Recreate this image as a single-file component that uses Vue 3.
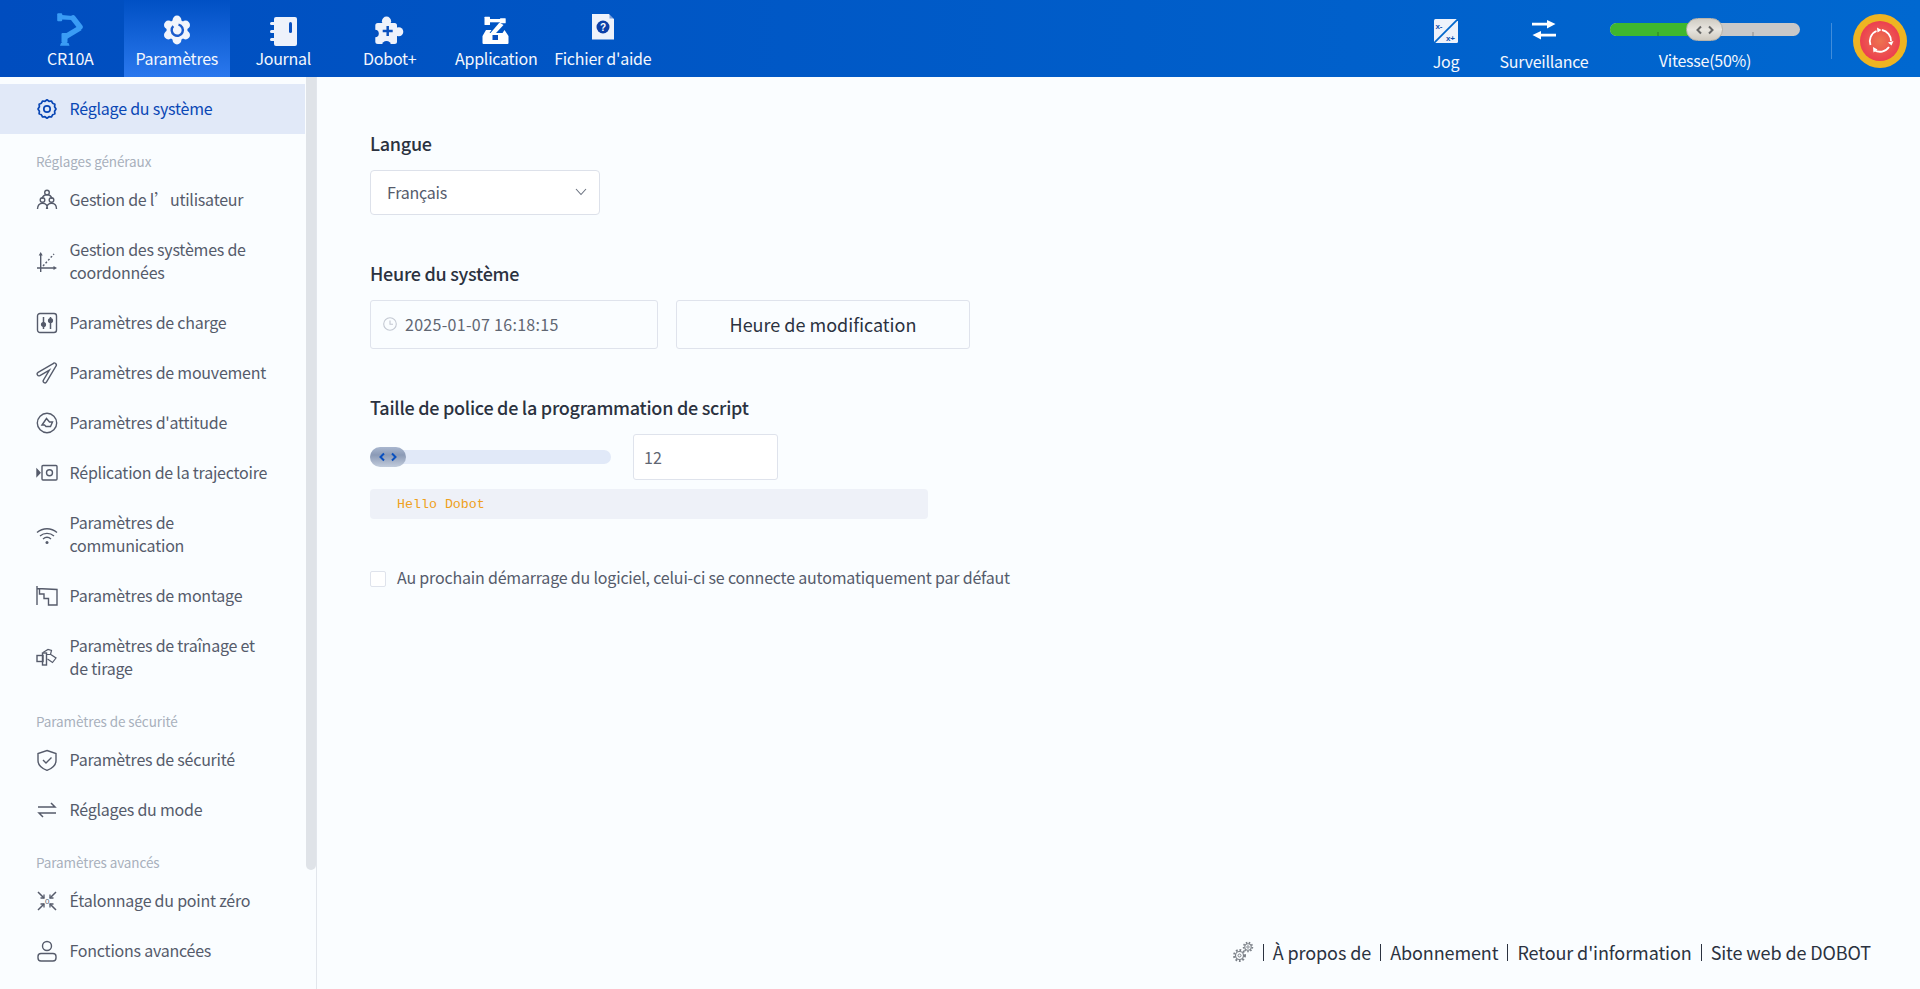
<script setup>
const navTabs = [
  { label: 'CR10A', icon: 'robot' },
  { label: 'Paramètres', icon: 'gear', active: true },
  { label: 'Journal', icon: 'notebook' },
  { label: 'Dobot+', icon: 'puzzle' },
  { label: 'Application', icon: 'app' },
  { label: "Fichier d'aide", icon: 'help' },
]

const navIcons = {
  robot: `<g fill="#3a9cf5"><rect x="3.2" y="0.3" width="5" height="8" rx="1"/><path d="M8 2l10.500 1v4L8 6.500z"/><path d="M19 5L26 14" stroke="#3a9cf5" stroke-width="5.500" stroke-linecap="round"/><path d="M26 15L11 24" stroke="#3a9cf5" stroke-width="5.500"/><rect x="7.500" y="20" width="6" height="10" rx="1"/><path d="M7 30h7.500l1 2.700H6z"/></g>`,
  gear: `<g fill="#f2f5fc"><circle cx="16" cy="17" r="10.500"/><circle cx="16" cy="7" r="4.400"/><circle cx="16" cy="27" r="4.400"/><circle cx="7.400" cy="12" r="4.400"/><circle cx="24.600" cy="12" r="4.400"/><circle cx="7.400" cy="22" r="4.400"/><circle cx="24.600" cy="22" r="4.400"/></g><path d="M17.500 11.700a5.600 5.600 0 1 1-5.200 1.500" fill="none" stroke="#1c5ccc" stroke-width="2.400"/>`,
  notebook: `<path fill="#eef2fb" d="M9 4h19a2 2 0 0 1 2 2v25a2 2 0 0 1-2 2H9a2 2 0 0 1-2-2V6a2 2 0 0 1 2-2z"/><g fill="#eef2fb"><rect x="3" y="9" width="6" height="3" rx="1.500"/><rect x="3" y="17" width="6" height="3" rx="1.500"/><rect x="3" y="25" width="6" height="3" rx="1.500"/></g><rect x="22" y="9" width="3" height="11" rx="1.500" fill="#0a50bf"/>`,
  puzzle: `<rect x="1.300" y="10" width="21.700" height="21" rx="2.500" fill="#eef2fb"/><circle cx="12.500" cy="8.200" r="4.600" fill="#eef2fb"/><circle cx="24.800" cy="18.700" r="4.500" fill="#eef2fb"/><circle cx="1" cy="20.500" r="3.800" fill="#0350c0"/><circle cx="12.500" cy="32.500" r="4.500" fill="#0350c0"/><path d="M13.700 13v10M8.700 18h10" stroke="#0a50bf" stroke-width="2.500" fill="none"/>`,
  app: `<g fill="#fff"><rect x="4.500" y="3.700" width="5.500" height="8.300" rx=".5"/><rect x="10" y="6" width="10" height="3.300"/><rect x="20" y="5.300" width="5.700" height="5" rx=".5"/><path d="M19.500 9.500l4 2.500-7.500 8H10.500z"/><path d="M6 17h5.500l-2 3h13l2-3L28.500 23v7a1 1 0 0 1-1 1h-24a1 1 0 0 1-1-1v-7z"/></g><rect x="12.500" y="22" width="5.500" height="5" fill="#0a50bf"/>`,
  help: `<path fill="#eef2fb" d="M5 1h17l5 5v20.500H5z"/><path fill="#0a50bf" d="M22.500 1l4.500 4.500h-4.500z" opacity=".5"/><circle cx="16" cy="14" r="6.500" fill="#0c3fa8"/><text x="16" y="17.500" text-anchor="middle" font-size="10" font-weight="700" fill="#fff" font-family="Liberation Sans, sans-serif">?</text>`,
}

const menu = [
  { label: 'Réglage du système', icon: 'gear', active: true },
  { section: 'Réglages généraux' },
  { label: 'Gestion de l’utilisateur', icon: 'users' },
  { label: 'Gestion des systèmes de coordonnées', icon: 'axes' },
  { label: 'Paramètres de charge', icon: 'load' },
  { label: 'Paramètres de mouvement', icon: 'motion' },
  { label: "Paramètres d'attitude", icon: 'attitude' },
  { label: 'Réplication de la trajectoire', icon: 'camera' },
  { label: 'Paramètres de communication', icon: 'wifi' },
  { label: 'Paramètres de montage', icon: 'mount' },
  { label: 'Paramètres de traînage et de tirage', icon: 'drag' },
  { section: 'Paramètres de sécurité' },
  { label: 'Paramètres de sécurité', icon: 'shield' },
  { label: 'Réglages du mode', icon: 'swap' },
  { section: 'Paramètres avancés' },
  { label: 'Étalonnage du point zéro', icon: 'zero' },
  { label: 'Fonctions avancées', icon: 'person' },
]

const menuIcons = {
  gear: `<path d="M11 1.800l2 1.500 2.400-.3 1.200 2.200 2.300 1-.3 2.500L20 11l-1.400 2.300.3 2.500-2.300 1-1.200 2.200-2.400-.3-2 1.500-2-1.500-2.400.3-1.200-2.200-2.300-1 .3-2.500L2 11l1.400-2.300-.3-2.500 2.300-1L6.600 3l2.400.3z" stroke-width="1.700" stroke-linejoin="round"/><circle cx="11" cy="11" r="3.200" stroke-width="1.700"/>`,
  users: `<circle cx="11" cy="3.500" r="2.300"/><circle cx="6.500" cy="11" r="2.300"/><circle cx="15.500" cy="11" r="2.300"/><path d="M6 10c.5-2.800 2.500-4.300 5-4.300s4.500 1.500 5 4.300M1.500 20c0-3.500 2-5.800 5-5.800s5 2.300 5 5.800M10.500 20c0-3.500 2-5.800 5-5.800s5 2.300 5 5.800"/>`,
  axes: `<path d="M4.700 3v18M1 17h18"/><path d="M4.700 1l-2 3.500h4zM21 17l-3.500-2v4z" fill="#555b6b" stroke="none"/><path d="M7 15L18 3" stroke-dasharray="2 1.800"/>`,
  load: `<rect x="1.500" y="1.500" width="19" height="19" rx="2.500"/><path d="M7.500 5v12M14.500 5v12" stroke-width="1.500"/><circle cx="7.500" cy="12.500" r="1.900" fill="#555b6b"/><circle cx="14.500" cy="8.500" r="1.900" fill="#555b6b"/>`,
  motion: `<g stroke-linecap="round"><path d="M18.500 3L3 12M18.500 3L9 19" stroke-width="5"/><path d="M18.500 3L3 12M18.500 3L9 19" stroke="#fafdff" stroke-width="2.300"/></g>`,
  attitude: `<circle cx="11" cy="11" r="9.700"/><path d="M6 13l4.500-6.500 3 3.500h3l-2 4.500H10l-1.500-1.500z"/>`,
  camera: `<rect x="6" y="3.500" width="15" height="14.500" rx="1"/><circle cx="13.500" cy="10.800" r="3"/><path d="M1 7.500l3 3.200-3 3.300z" fill="#555b6b"/>`,
  wifi: `<path d="M1 8.500c5.800-5 14.200-5 20 0M4 12c4-3.500 10-3.500 14 0M7 15c2.400-2 5.600-2 8 0"/><circle cx="11" cy="18.500" r="1.500" fill="#555b6b" stroke="none"/>`,
  mount: `<path d="M1 1v19M1 3.500l20 1V20H12.500v-6.500H8V9H3.500V3.500"/>`,
  drag: `<rect x="1" y="8.500" width="6" height="6"/><rect x="6.500" y="6" width="4" height="12"/><path d="M7 5.500l5-3 3.500 1-1 4h-4M14 7l6 4-3.500 4.500-5-3.500" stroke-width="1.200"/>`,
  shield: `<path d="M11 1.500l9 3v7c0 5-4 8-9 9.800-5-1.800-9-4.800-9-9.800v-7z"/><path d="M7 11l3 3 5.500-5.500"/>`,
  swap: `<path d="M2 8h17L15 4M20 14H3l4 4" stroke-width="1.500"/>`,
  zero: `<path d="M2 2l6 6M20 2l-6 6M2 20l6-6M20 20l-6-6" stroke-width="1.500"/><path d="M8 4.500V8H4.500M14 4.500V8h3.500M8 17.500V14H4.500M14 17.500V14h3.500" stroke-width="1.300"/><text x="11" y="14" text-anchor="middle" font-size="8" fill="#555b6b" stroke="none" font-family="Liberation Sans, sans-serif">0</text>`,
  person: `<circle cx="11" cy="6" r="4.500"/><rect x="2" y="13.500" width="18" height="7.500" rx="3"/>`,
}

const footerLinks = ['À propos de', 'Abonnement', "Retour d'information", 'Site web de DOBOT']
</script>

<template>
  <div class="page">
    <header class="topbar">
      <nav class="tabs">
        <div v-for="tab in navTabs" :key="tab.label" class="tab" :class="{ active: tab.active }">
          <svg class="tab-icon" viewBox="0 0 32 33" width="32" height="33" v-html="navIcons[tab.icon]"></svg>
          <span>{{ tab.label }}</span>
        </div>
      </nav>

      <div class="controls">
        <div class="tool">
          <svg viewBox="0 0 24 24" width="24" height="24">
            <rect width="24" height="24" rx="1.5" fill="#eef2fb" />
            <path d="M25 -1L-1 25" stroke="#0066cc" stroke-width="1.8" />
            <text x="1.5" y="10" font-size="8" font-weight="700" fill="#0b4fb0" font-family="Liberation Sans, sans-serif">x-</text>
            <text x="12" y="21.5" font-size="8" font-weight="700" fill="#0b4fb0" font-family="Liberation Sans, sans-serif">x+</text>
          </svg>
          <span>Jog</span>
        </div>
        <div class="tool">
          <svg viewBox="0 0 26 24" width="26" height="24">
            <path d="M1 3.700h15V1l8.500 4-8.500 4.500V6.500H1zM25 14.700H10V12l-8.500 4 8.500 4.500v-3h15z" fill="#fff" />
          </svg>
          <span>Surveillance</span>
        </div>
        <div class="speed">
          <div class="speed-track">
            <div class="speed-fill"></div>
            <i class="tick tick-a"></i>
            <i class="tick tick-b"></i>
            <div class="speed-thumb">
              <svg viewBox="0 0 20 10" width="20" height="10">
                <path d="M6 1.500L2.500 5 6 8.500M14 1.500L17.500 5 14 8.500" fill="none" stroke="#666" stroke-width="2" />
              </svg>
            </div>
          </div>
          <span class="speed-label">Vitesse(50%)</span>
        </div>
        <div class="divider"></div>
        <div class="estop">
          <svg viewBox="0 0 54 54" width="54" height="54">
            <defs>
              <radialGradient id="estopRed">
                <stop offset="0" stop-color="#ed7450" />
                <stop offset="1" stop-color="#ec3f50" />
              </radialGradient>
            </defs>
            <circle cx="27" cy="27" r="27" fill="#eeb422" />
            <circle cx="27" cy="27" r="20" fill="url(#estopRed)" />
            <g fill="none" stroke="#fff" stroke-width="1.8">
              <path d="M17.500 31a11 11 0 0 1 6-14" />
              <path d="M29 16a11 11 0 0 1 9 11" />
              <path d="M36 33a11 11 0 0 1-15 3" />
            </g>
            <g fill="#fff">
              <path d="M28.500 16l-4.500-2.500.5 5z" />
              <path d="M35 28.500l3.500 3 2-4.500z" />
              <path d="M20 33l.5 5.500 4-3z" />
            </g>
          </svg>
        </div>
      </div>
    </header>

    <div class="body">
      <aside class="sidebar">
        <div class="scroll-thumb"></div>
        <template v-for="entry in menu" :key="entry.label || entry.section">
          <div v-if="entry.section" class="menu-section">{{ entry.section }}</div>
          <div v-else class="menu-item" :class="{ active: entry.active }">
            <svg class="menu-icon" viewBox="0 0 22 22" width="22" height="22" v-html="menuIcons[entry.icon]"></svg>
            <span>{{ entry.label }}</span>
          </div>
        </template>
      </aside>

      <main class="content">
        <section class="block">
          <h3>Langue</h3>
          <div class="select">
            <span>Français</span>
            <svg viewBox="0 0 12 8" width="12" height="8">
              <path d="M1 1l5 5.500L11 1" fill="none" stroke="#6b7280" stroke-width="1.1" />
            </svg>
          </div>
        </section>

        <section class="block">
          <h3>Heure du système</h3>
          <div class="time-row">
            <div class="time-input">
              <svg viewBox="0 0 14 14" width="14" height="14">
                <circle cx="7" cy="7" r="6.300" fill="none" stroke="#c3c8d2" stroke-width="1.1" />
                <path d="M7 3.500V7.300h3" fill="none" stroke="#c3c8d2" stroke-width="1.1" />
              </svg>
              <span>2025-01-07 16:18:15</span>
            </div>
            <button class="time-btn" type="button">Heure de modification</button>
          </div>
        </section>

        <section class="block">
          <h3>Taille de police de la programmation de script</h3>
          <div class="font-row">
            <div class="font-track">
              <div class="font-thumb">
                <svg viewBox="0 0 20 10" width="20" height="10">
                  <path d="M6 1.500L2.500 5 6 8.500M14 1.500L17.500 5 14 8.500" fill="none" stroke="#0a50bf" stroke-width="2" />
                </svg>
              </div>
            </div>
            <div class="font-input">12</div>
          </div>
          <div class="preview">Hello Dobot</div>
        </section>

        <label class="auto-connect">
          <i class="checkbox"></i>
          <span>Au prochain démarrage du logiciel, celui-ci se connecte automatiquement par défaut</span>
        </label>

        <footer class="footer">
          <svg viewBox="0 0 22 22" width="22" height="22">
            <g fill="none" stroke="#7b8088">
              <circle cx="7.5" cy="14.500" r="4" stroke-width="1.2" />
              <circle cx="7.5" cy="14.500" r="5.500" stroke-width="2" stroke-dasharray="1.800 1.800" />
              <circle cx="7.5" cy="14.500" r="1.500" stroke-width="1" />
              <circle cx="16" cy="6" r="3.200" stroke-width="1.1" />
              <circle cx="16" cy="6" r="4.400" stroke-width="1.700" stroke-dasharray="1.500 1.500" />
              <circle cx="16" cy="6" r="1.200" stroke-width="0.9" />
            </g>
          </svg>
          <template v-for="link in footerLinks" :key="link">
            <i class="sep"></i>
            <span>{{ link }}</span>
          </template>
        </footer>
      </main>
    </div>
  </div>
</template>

<style scoped>
.page {
  display: flex;
  flex-direction: column;
  height: 100vh;
  overflow: hidden;
  background: #fafdff;
  font-family: "Noto Sans CJK SC", "Noto Sans", sans-serif;
  color: #2b3240;
}

.topbar {
  display: flex;
  flex: none;
  justify-content: space-between;
  height: 77px;
  padding: 0 13px 0 17px;
  color: #fff;
  background: linear-gradient(90deg, #004dbf, #0068d0);
}
.tabs {
  display: flex;
}
.tab {
  display: flex;
  flex-direction: column;
  align-items: center;
  width: 106.5px;
  padding-top: 13px;
  font-size: 16px;
  letter-spacing: -0.25px;
  line-height: 24px;
  white-space: nowrap;
  color: #f4f7fd;
}
.tab.active {
  background: linear-gradient(180deg, #0050c4, #2a78ee);
}
.tab-icon {
  flex: none;
}

.controls {
  display: flex;
}
.tool {
  display: flex;
  flex-direction: column;
  align-items: center;
  width: 98px;
  padding-top: 19px;
  font-size: 16px;
  letter-spacing: -0.25px;
  line-height: 24px;
  color: #f4f7fd;
}
.tool svg {
  flex: none;
  margin-bottom: 6px;
}
.speed {
  display: flex;
  flex-direction: column;
  align-items: center;
  width: 190px;
  margin-left: 17px;
  padding-top: 23px;
}
.speed-track {
  position: relative;
  width: 100%;
  height: 13px;
  border-radius: 7px;
  background: #c8c8c8;
}
.speed-fill {
  width: 50%;
  height: 100%;
  border-radius: 7px 0 0 7px;
  background: #3fb72f;
}
.tick {
  position: absolute;
  bottom: 0;
  width: 2px;
  height: 4px;
}
.tick-a {
  left: 47px;
  background: #35982a;
}
.tick-b {
  left: 142px;
  background: #aaa;
}
.speed-thumb {
  position: absolute;
  top: -5px;
  left: 76px;
  display: flex;
  align-items: center;
  justify-content: center;
  width: 37px;
  height: 23px;
  box-sizing: border-box;
  border: 1px solid #b9b4aa;
  border-radius: 12px;
  background: linear-gradient(180deg, #d0ccc4, #e8e5df 50%, #cfcac0);
}
.speed-label {
  margin-top: 12px;
  font-size: 16px;
  letter-spacing: -0.25px;
  line-height: 24px;
  color: #f4f7fd;
}
.divider {
  width: 1px;
  height: 36px;
  margin: 23px 21px 0 31px;
  background: rgba(255, 255, 255, 0.25);
}
.estop {
  padding-top: 14px;
}
.estop svg {
  display: block;
}

.body {
  display: flex;
  flex: 1;
  min-height: 0;
}

.sidebar {
  position: relative;
  flex: none;
  box-sizing: border-box;
  width: 317px;
  padding: 7px 11px 0 0;
  border-right: 1px solid #e2e6ec;
  overflow: hidden;
}
.scroll-thumb {
  position: absolute;
  top: 0;
  right: 0;
  width: 10px;
  height: 793px;
  border-radius: 0 0 5px 5px;
  background: #dfe3e8;
}
.menu-section {
  box-sizing: border-box;
  height: 41px;
  padding: 17px 0 0 36px;
  font-size: 13.5px;
  letter-spacing: -0.1px;
  line-height: 20px;
  color: #a8b0bc;
}
.menu-item {
  display: flex;
  align-items: center;
  gap: 11.5px;
  padding: 12.5px 31px 12.5px 36px;
  font-size: 16px;
  letter-spacing: -0.23px;
  line-height: 23px;
  color: #555b6b;
}
.menu-item span {
  padding-bottom: 2px;
}
.menu-item.active {
  color: #0a47b5;
  background: #e1e9f8;
}
.menu-icon {
  flex: none;
  fill: none;
  stroke: #555b6b;
  stroke-width: 1.4;
}
.menu-item.active .menu-icon {
  stroke: #0a47b5;
}

.content {
  display: flex;
  flex: 1;
  flex-direction: column;
  min-width: 0;
  padding: 8px 49px 24px 53px;
}
.block {
  margin-top: 48px;
}
.block h3 {
  margin: -2px 0 15px;
  font-size: 18px;
  font-weight: 500;
  letter-spacing: -0.27px;
  line-height: 24px;
  color: #2b3240;
}
.select {
  display: flex;
  align-items: center;
  justify-content: space-between;
  box-sizing: border-box;
  width: 230px;
  height: 45px;
  padding: 0 12px 2px 16px;
  border: 1px solid #dde1ea;
  border-radius: 4px;
  background: #fff;
  font-size: 16px;
  letter-spacing: -0.25px;
  color: #555b6b;
}
.time-row {
  display: flex;
  gap: 18px;
}
.time-input {
  display: flex;
  align-items: center;
  gap: 8px;
  box-sizing: border-box;
  width: 288px;
  height: 49px;
  padding: 0 0 2px 12px;
  border: 1px solid #dfe3ec;
  border-radius: 3px;
  font-size: 16px;
  letter-spacing: 0.3px;
  color: #606672;
}
.time-btn {
  box-sizing: border-box;
  width: 294px;
  height: 49px;
  padding: 0 0 1px;
  border: 1px solid #dfe3ec;
  border-radius: 3px;
  background: transparent;
  font: inherit;
  font-size: 18px;
  color: #2b3240;
}
.font-row {
  display: flex;
  align-items: center;
  gap: 22px;
  height: 46px;
}
.font-track {
  display: flex;
  align-items: center;
  width: 241px;
  height: 14px;
  border-radius: 7px;
  background: #e1e9f8;
}
.font-thumb {
  display: flex;
  align-items: center;
  justify-content: center;
  flex: none;
  width: 36px;
  height: 20px;
  border-radius: 10px;
  background: linear-gradient(180deg, #a9b7cf, #8b9ab6 40%, #c2ccdc);
}
.font-input {
  display: flex;
  align-items: center;
  box-sizing: border-box;
  width: 145px;
  height: 46px;
  padding-left: 10px;
  border: 1px solid #dfe3ec;
  border-radius: 3px;
  background: #fff;
  font-size: 16px;
  color: #606672;
}
.preview {
  width: 558px;
  height: 30px;
  margin-top: 9px;
  padding: 1px 0 0 27px;
  box-sizing: border-box;
  border-radius: 4px;
  background: #eef1f8;
  font-family: "Liberation Mono", monospace;
  font-size: 13.3px;
  line-height: 30px;
  color: #eea020;
}
.auto-connect {
  display: flex;
  align-items: center;
  gap: 11px;
  margin-top: 46px;
  font-size: 16px;
  letter-spacing: -0.19px;
  line-height: 24px;
  color: #555b6b;
}
.auto-connect span {
  padding-bottom: 3px;
}
.checkbox {
  flex: none;
  box-sizing: border-box;
  width: 16px;
  height: 16px;
  border: 1px solid #dfe3ec;
  border-radius: 2px;
  background: #fff;
}
.footer {
  display: flex;
  align-items: center;
  justify-content: flex-end;
  gap: 9px;
  margin-top: auto;
  font-size: 18px;
  letter-spacing: -0.1px;
  line-height: 24px;
  color: #2b3240;
}
.footer span {
  padding-bottom: 1.5px;
}
.sep {
  width: 1px;
  height: 17px;
  background: #2b3240;
}
</style>

<style>
html,
body {
  margin: 0;
  background: #fafdff;
}
</style>
